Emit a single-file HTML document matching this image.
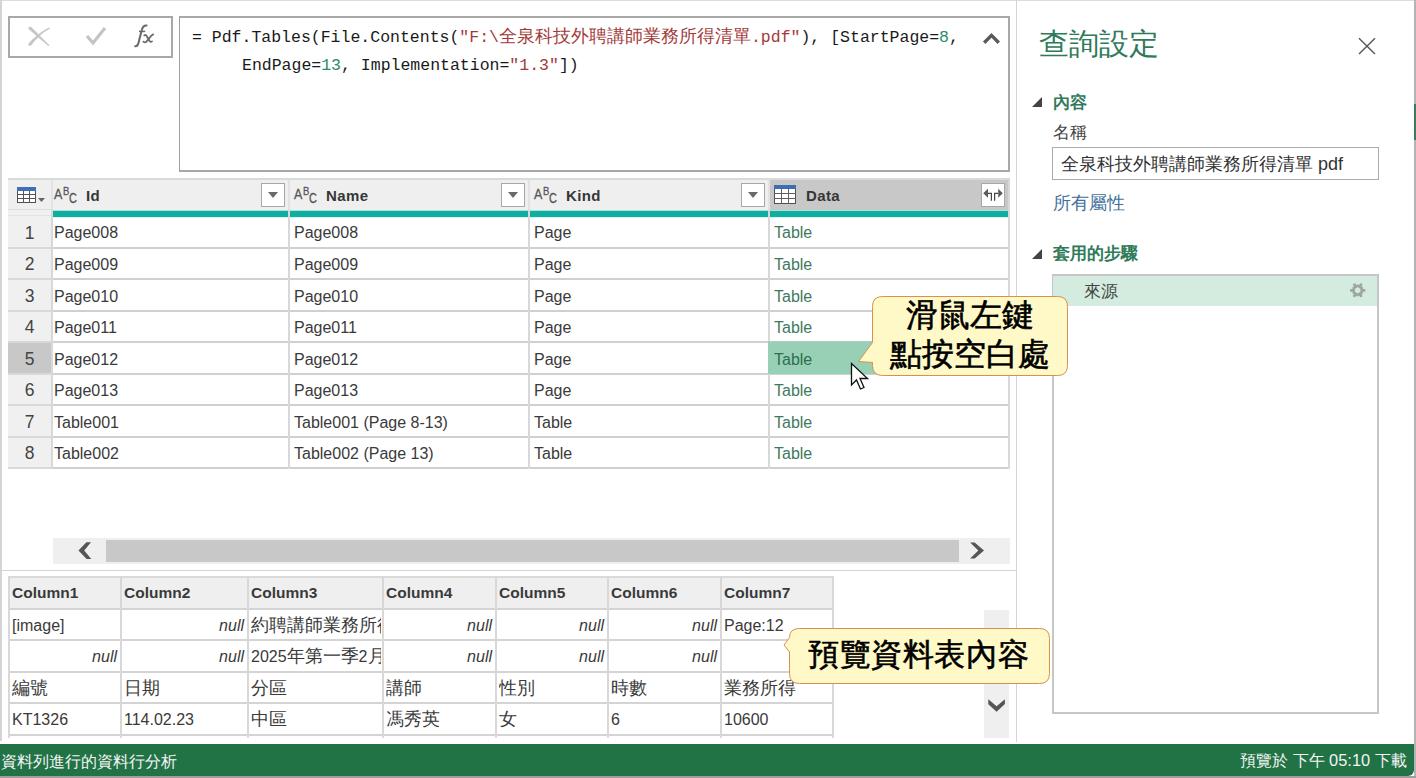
<!DOCTYPE html><html><head><meta charset="utf-8"><style>
html,body{margin:0;padding:0;width:1416px;height:778px;overflow:hidden;background:#fff;position:relative;font-family:"Liberation Sans", sans-serif;}
.t{position:absolute;white-space:nowrap;}
.sans{font-family:"Liberation Sans",sans-serif;}
.mono{font-family:"Liberation Mono",monospace;}
.serif{font-family:"Liberation Serif",serif;}
</style></head><body>
<div style="position:absolute;left:0px;top:0px;width:1416px;height:1px;background:#dcdcdc"></div>
<div style="position:absolute;left:0px;top:0px;width:2px;height:741px;background:#d4d4d4"></div>
<div style="position:absolute;left:8px;top:16px;width:161px;height:38px;border:2px solid #a8a8a8"></div>
<svg style="position:absolute;left:20px;top:18px" width="40" height="36" viewBox="20 18 40 36"><path d="M28.2 28.8 Q28.8 26.2 31 26.8 L49.4 45.2 L48.6 46.2 Z" fill="#c6c6c6"/><path d="M49.2 27.4 L50 28.6 Q40 34 31.2 45.2 Q29 46.6 28 44.2 Q29.5 41.5 40 33 Q45 29.2 49.2 27.4 Z" fill="#c6c6c6"/></svg>
<svg style="position:absolute;left:85px;top:25px" width="24" height="22" viewBox="0 0 24 22"><path d="M2 11 L8 18 L20 3" stroke="#c4c4c4" stroke-width="3.2" fill="none"/></svg>
<svg style="position:absolute;left:120px;top:18px" width="50" height="36" viewBox="0 0 50 36"><path d="M15.2 28.3 C17.5 28.5 18.6 26 19.2 22 L21.8 12 C22.6 8.5 23.8 7.2 26.6 7.4" stroke="#6a6a6a" stroke-width="2" fill="none" stroke-linecap="round"/><path d="M19 13.4 H25.2" stroke="#6a6a6a" stroke-width="1.5"/><path d="M24.2 17.4 C25.5 16.6 26.6 17 27.4 19.5 L29.8 23.2 C30.4 24 31.3 24 32 23.4 M33.2 16.4 C31.5 17 30.5 18.4 29 20.6 L26.5 23.6 C25.8 24.3 24.4 24.4 23.4 23.8" stroke="#6a6a6a" stroke-width="1.8" fill="none" stroke-linecap="round"/></svg>
<div style="position:absolute;left:179px;top:16px;width:828px;height:152px;border:2px solid #a8a8a8;border-left:1px solid #a0a0a0"></div>
<div class="t mono" style="left:192px;top:27.11px;height:21px;line-height:21px;font-size:16.5px;color:#1a1a1a;font-weight:normal;"><span style="color:#1a1a1a">= Pdf.Tables(File.Contents(</span><span style="color:#a33b3b">"F:\<span style="font-size:18px;font-weight:350">全泉科技外聘講師業務所得清單</span>.pdf"</span><span style="color:#1a1a1a">), [StartPage=</span><span style="color:#2a8a6a">8</span><span style="color:#1a1a1a">,</span></div>
<div class="t mono" style="left:242px;top:55.11px;height:21px;line-height:21px;font-size:16.5px;color:#1a1a1a;font-weight:normal;"><span style="color:#1a1a1a">EndPage=</span><span style="color:#2a8a6a">13</span><span style="color:#1a1a1a">, Implementation=</span><span style="color:#a33b3b">"1.3"</span><span style="color:#1a1a1a">])</span></div>
<svg style="position:absolute;left:975px;top:25px" width="33" height="27" viewBox="975 25 33 27"><path d="M984.2 42.7 L991.5 35.4 L998.8 42.7" stroke="#5a5a5a" stroke-width="3.4" fill="none" stroke-linejoin="miter"/></svg>
<div style="position:absolute;left:8px;top:178px;width:1001px;height:2px;background:#dadada"></div>
<div style="position:absolute;left:8px;top:180px;width:1000px;height:30px;background:#efefef"></div>
<div style="position:absolute;left:770px;top:180px;width:238px;height:30px;background:#c8c8c8"></div>
<div style="position:absolute;left:53px;top:210px;width:235px;height:1px;background:#a6e6dc"></div>
<div style="position:absolute;left:53px;top:211px;width:235px;height:6px;background:#11ad9e"></div>
<div style="position:absolute;left:53px;top:217px;width:235px;height:1px;background:#d4f6f0"></div>
<div style="position:absolute;left:290px;top:210px;width:238px;height:1px;background:#a6e6dc"></div>
<div style="position:absolute;left:290px;top:211px;width:238px;height:6px;background:#11ad9e"></div>
<div style="position:absolute;left:290px;top:217px;width:238px;height:1px;background:#d4f6f0"></div>
<div style="position:absolute;left:530px;top:210px;width:238px;height:1px;background:#a6e6dc"></div>
<div style="position:absolute;left:530px;top:211px;width:238px;height:6px;background:#11ad9e"></div>
<div style="position:absolute;left:530px;top:217px;width:238px;height:1px;background:#d4f6f0"></div>
<div style="position:absolute;left:770px;top:210px;width:238px;height:1px;background:#a6e6dc"></div>
<div style="position:absolute;left:770px;top:211px;width:238px;height:6px;background:#11ad9e"></div>
<div style="position:absolute;left:770px;top:217px;width:238px;height:1px;background:#d4f6f0"></div>
<div style="position:absolute;left:8px;top:209px;width:43px;height:8px;background:#f0f0f0"></div>
<div style="position:absolute;left:8px;top:209px;width:43px;height:1px;background:#dedede"></div>
<div style="position:absolute;left:8px;top:215px;width:43px;height:1px;background:#e2e2e2"></div>
<div style="position:absolute;left:8px;top:217px;width:43px;height:30px;background:#f0f0f0"></div>
<div style="position:absolute;left:8px;top:247px;width:43px;height:2px;background:#d9d9d9"></div>
<div style="position:absolute;left:53px;top:247px;width:956px;height:2px;background:#d0d0d0"></div>
<div style="position:absolute;left:8px;top:249px;width:43px;height:29px;background:#f0f0f0"></div>
<div style="position:absolute;left:8px;top:278px;width:43px;height:2px;background:#d9d9d9"></div>
<div style="position:absolute;left:53px;top:278px;width:956px;height:2px;background:#d0d0d0"></div>
<div style="position:absolute;left:8px;top:280px;width:43px;height:30px;background:#f0f0f0"></div>
<div style="position:absolute;left:8px;top:310px;width:43px;height:2px;background:#d9d9d9"></div>
<div style="position:absolute;left:53px;top:310px;width:956px;height:2px;background:#d0d0d0"></div>
<div style="position:absolute;left:8px;top:312px;width:43px;height:29px;background:#f0f0f0"></div>
<div style="position:absolute;left:8px;top:341px;width:43px;height:2px;background:#d9d9d9"></div>
<div style="position:absolute;left:53px;top:341px;width:956px;height:2px;background:#d0d0d0"></div>
<div style="position:absolute;left:8px;top:343px;width:43px;height:30px;background:#c8c8c8"></div>
<div style="position:absolute;left:8px;top:373px;width:43px;height:2px;background:#d9d9d9"></div>
<div style="position:absolute;left:53px;top:373px;width:956px;height:2px;background:#d0d0d0"></div>
<div style="position:absolute;left:8px;top:375px;width:43px;height:29px;background:#f0f0f0"></div>
<div style="position:absolute;left:8px;top:404px;width:43px;height:2px;background:#d9d9d9"></div>
<div style="position:absolute;left:53px;top:404px;width:956px;height:2px;background:#d0d0d0"></div>
<div style="position:absolute;left:8px;top:406px;width:43px;height:30px;background:#f0f0f0"></div>
<div style="position:absolute;left:8px;top:436px;width:43px;height:2px;background:#d9d9d9"></div>
<div style="position:absolute;left:53px;top:436px;width:956px;height:2px;background:#d0d0d0"></div>
<div style="position:absolute;left:8px;top:438px;width:43px;height:29px;background:#f0f0f0"></div>
<div style="position:absolute;left:8px;top:467px;width:43px;height:2px;background:#d9d9d9"></div>
<div style="position:absolute;left:53px;top:467px;width:956px;height:2px;background:#d0d0d0"></div>
<div style="position:absolute;left:51px;top:180px;width:2px;height:30px;background:#e2e2e2"></div>
<div style="position:absolute;left:51px;top:210px;width:2px;height:259px;background:#d8d8d8"></div>
<div style="position:absolute;left:288px;top:180px;width:2px;height:30px;background:#e2e2e2"></div>
<div style="position:absolute;left:288px;top:210px;width:2px;height:259px;background:#d8d8d8"></div>
<div style="position:absolute;left:528px;top:180px;width:2px;height:30px;background:#e2e2e2"></div>
<div style="position:absolute;left:528px;top:210px;width:2px;height:259px;background:#d8d8d8"></div>
<div style="position:absolute;left:768px;top:180px;width:2px;height:30px;background:#e2e2e2"></div>
<div style="position:absolute;left:768px;top:210px;width:2px;height:259px;background:#d8d8d8"></div>
<div style="position:absolute;left:1008px;top:178px;width:2px;height:291px;background:#d8d8d8"></div>
<div style="position:absolute;left:768px;top:341px;width:240px;height:32px;background:#97d0b4;border-top:1px solid #b8c8c0"></div>
<div class="t sans" style="left:54px;top:185.47px;height:19px;line-height:19px;font-size:14.5px;color:#555;font-weight:normal;transform:scaleX(0.86);transform-origin:0 0;-webkit-text-stroke:0.3px #555;">A</div>
<div class="t sans" style="left:63px;top:184.01px;height:15px;line-height:15px;font-size:11.5px;color:#555;font-weight:normal;transform:scaleX(0.82);transform-origin:0 0;-webkit-text-stroke:0.3px #555;">B</div>
<div class="t sans" style="left:68.5px;top:189.15px;height:18px;line-height:18px;font-size:14px;color:#555;font-weight:normal;transform:scaleX(0.78);transform-origin:0 0;-webkit-text-stroke:0.3px #555;">C</div>
<div class="t sans" style="left:86px;top:185.8px;height:20px;line-height:20px;font-size:15px;color:#363636;font-weight:bold;letter-spacing:0.4px;">Id</div>
<div style="position:absolute;left:261px;top:183px;width:22px;height:22px;background:#fff;border:1px solid #a8a8a8"></div>
<svg style="position:absolute;left:268px;top:192px" width="10" height="6" viewBox="0 0 10 6"><path d="M0 0 L10 0 L5 6 Z" fill="#6a6a6a"/></svg>
<div class="t sans" style="left:294px;top:185.47px;height:19px;line-height:19px;font-size:14.5px;color:#555;font-weight:normal;transform:scaleX(0.86);transform-origin:0 0;-webkit-text-stroke:0.3px #555;">A</div>
<div class="t sans" style="left:303px;top:184.01px;height:15px;line-height:15px;font-size:11.5px;color:#555;font-weight:normal;transform:scaleX(0.82);transform-origin:0 0;-webkit-text-stroke:0.3px #555;">B</div>
<div class="t sans" style="left:308.5px;top:189.15px;height:18px;line-height:18px;font-size:14px;color:#555;font-weight:normal;transform:scaleX(0.78);transform-origin:0 0;-webkit-text-stroke:0.3px #555;">C</div>
<div class="t sans" style="left:326px;top:185.8px;height:20px;line-height:20px;font-size:15px;color:#363636;font-weight:bold;letter-spacing:0.4px;">Name</div>
<div style="position:absolute;left:501px;top:183px;width:22px;height:22px;background:#fff;border:1px solid #a8a8a8"></div>
<svg style="position:absolute;left:508px;top:192px" width="10" height="6" viewBox="0 0 10 6"><path d="M0 0 L10 0 L5 6 Z" fill="#6a6a6a"/></svg>
<div class="t sans" style="left:534px;top:185.47px;height:19px;line-height:19px;font-size:14.5px;color:#555;font-weight:normal;transform:scaleX(0.86);transform-origin:0 0;-webkit-text-stroke:0.3px #555;">A</div>
<div class="t sans" style="left:543px;top:184.01px;height:15px;line-height:15px;font-size:11.5px;color:#555;font-weight:normal;transform:scaleX(0.82);transform-origin:0 0;-webkit-text-stroke:0.3px #555;">B</div>
<div class="t sans" style="left:548.5px;top:189.15px;height:18px;line-height:18px;font-size:14px;color:#555;font-weight:normal;transform:scaleX(0.78);transform-origin:0 0;-webkit-text-stroke:0.3px #555;">C</div>
<div class="t sans" style="left:566px;top:185.8px;height:20px;line-height:20px;font-size:15px;color:#363636;font-weight:bold;letter-spacing:0.4px;">Kind</div>
<div style="position:absolute;left:741px;top:183px;width:22px;height:22px;background:#fff;border:1px solid #a8a8a8"></div>
<svg style="position:absolute;left:748px;top:192px" width="10" height="6" viewBox="0 0 10 6"><path d="M0 0 L10 0 L5 6 Z" fill="#6a6a6a"/></svg>
<svg style="position:absolute;left:774px;top:185px" width="22" height="19" viewBox="0 0 22 19"><rect x="0.5" y="0.5" width="21" height="18" fill="#fff" stroke="#505050"/><rect x="0.5" y="0.5" width="21" height="3" fill="#3f6db3" stroke="#3f6db3"/><path d="M0 8.5 H22 M0 13.5 H22 M7.5 4 V19 M14.5 4 V19" stroke="#606060" stroke-width="1"/></svg>
<div class="t sans" style="left:806px;top:185.8px;height:20px;line-height:20px;font-size:15px;color:#363636;font-weight:bold;letter-spacing:0.4px;">Data</div>
<div style="position:absolute;left:981px;top:183px;width:22px;height:22px;background:#fff;border:1px solid #a8a8a8"></div>
<svg style="position:absolute;left:983px;top:187px" width="20" height="15" viewBox="0 0 20 15"><path d="M0.2 6.3 L5 1.8 V10.8 Z M19.8 6.3 L15.2 1.8 V10.8 Z" fill="#5a5a5a"/><path d="M5 6.3 H8.4 V13.8 M15 6.3 H11.6 V13.8" stroke="#444" stroke-width="1.2" fill="none"/></svg>
<svg style="position:absolute;left:17px;top:187px" width="20" height="16" viewBox="0 0 20 16"><rect x="0.5" y="0.5" width="18" height="15" fill="#fff" stroke="#505050"/><rect x="0.5" y="0.5" width="18" height="3" fill="#3f6fb5" stroke="#3f6fb5"/><path d="M0 7.5 H19 M0 11.5 H19 M6.5 4 V16 M12.5 4 V16" stroke="#555" stroke-width="1"/></svg>
<svg style="position:absolute;left:38px;top:198px" width="7" height="4" viewBox="0 0 7 4"><path d="M0 0 H7 L3.5 4Z" fill="#666"/></svg>
<div class="t sans" style="left:8px;top:222.43px;height:23px;line-height:23px;font-size:17.5px;color:#444;font-weight:normal;width:43px;text-align:center;">1</div>
<div class="t sans" style="left:54px;top:221.95px;height:21px;line-height:21px;font-size:16px;color:#3a3a3a;font-weight:normal;">Page008</div>
<div class="t sans" style="left:294px;top:221.95px;height:21px;line-height:21px;font-size:16px;color:#3a3a3a;font-weight:normal;">Page008</div>
<div class="t sans" style="left:534px;top:221.95px;height:21px;line-height:21px;font-size:16px;color:#3a3a3a;font-weight:normal;">Page</div>
<div class="t sans" style="left:774px;top:221.95px;height:21px;line-height:21px;font-size:16px;color:#3d7a5e;font-weight:normal;">Table</div>
<div class="t sans" style="left:8px;top:253.43px;height:23px;line-height:23px;font-size:17.5px;color:#444;font-weight:normal;width:43px;text-align:center;">2</div>
<div class="t sans" style="left:54px;top:253.95px;height:21px;line-height:21px;font-size:16px;color:#3a3a3a;font-weight:normal;">Page009</div>
<div class="t sans" style="left:294px;top:253.95px;height:21px;line-height:21px;font-size:16px;color:#3a3a3a;font-weight:normal;">Page009</div>
<div class="t sans" style="left:534px;top:253.95px;height:21px;line-height:21px;font-size:16px;color:#3a3a3a;font-weight:normal;">Page</div>
<div class="t sans" style="left:774px;top:253.95px;height:21px;line-height:21px;font-size:16px;color:#3d7a5e;font-weight:normal;">Table</div>
<div class="t sans" style="left:8px;top:285.43px;height:23px;line-height:23px;font-size:17.5px;color:#444;font-weight:normal;width:43px;text-align:center;">3</div>
<div class="t sans" style="left:54px;top:285.95px;height:21px;line-height:21px;font-size:16px;color:#3a3a3a;font-weight:normal;">Page010</div>
<div class="t sans" style="left:294px;top:285.95px;height:21px;line-height:21px;font-size:16px;color:#3a3a3a;font-weight:normal;">Page010</div>
<div class="t sans" style="left:534px;top:285.95px;height:21px;line-height:21px;font-size:16px;color:#3a3a3a;font-weight:normal;">Page</div>
<div class="t sans" style="left:774px;top:285.95px;height:21px;line-height:21px;font-size:16px;color:#3d7a5e;font-weight:normal;">Table</div>
<div class="t sans" style="left:8px;top:316.43px;height:23px;line-height:23px;font-size:17.5px;color:#444;font-weight:normal;width:43px;text-align:center;">4</div>
<div class="t sans" style="left:54px;top:316.95px;height:21px;line-height:21px;font-size:16px;color:#3a3a3a;font-weight:normal;">Page011</div>
<div class="t sans" style="left:294px;top:316.95px;height:21px;line-height:21px;font-size:16px;color:#3a3a3a;font-weight:normal;">Page011</div>
<div class="t sans" style="left:534px;top:316.95px;height:21px;line-height:21px;font-size:16px;color:#3a3a3a;font-weight:normal;">Page</div>
<div class="t sans" style="left:774px;top:316.95px;height:21px;line-height:21px;font-size:16px;color:#3d7a5e;font-weight:normal;">Table</div>
<div class="t sans" style="left:8px;top:348.43px;height:23px;line-height:23px;font-size:17.5px;color:#444;font-weight:normal;width:43px;text-align:center;">5</div>
<div class="t sans" style="left:54px;top:348.95px;height:21px;line-height:21px;font-size:16px;color:#3a3a3a;font-weight:normal;">Page012</div>
<div class="t sans" style="left:294px;top:348.95px;height:21px;line-height:21px;font-size:16px;color:#3a3a3a;font-weight:normal;">Page012</div>
<div class="t sans" style="left:534px;top:348.95px;height:21px;line-height:21px;font-size:16px;color:#3a3a3a;font-weight:normal;">Page</div>
<div class="t sans" style="left:774px;top:348.95px;height:21px;line-height:21px;font-size:16px;color:#2f6e50;font-weight:normal;">Table</div>
<div class="t sans" style="left:8px;top:379.43px;height:23px;line-height:23px;font-size:17.5px;color:#444;font-weight:normal;width:43px;text-align:center;">6</div>
<div class="t sans" style="left:54px;top:379.95px;height:21px;line-height:21px;font-size:16px;color:#3a3a3a;font-weight:normal;">Page013</div>
<div class="t sans" style="left:294px;top:379.95px;height:21px;line-height:21px;font-size:16px;color:#3a3a3a;font-weight:normal;">Page013</div>
<div class="t sans" style="left:534px;top:379.95px;height:21px;line-height:21px;font-size:16px;color:#3a3a3a;font-weight:normal;">Page</div>
<div class="t sans" style="left:774px;top:379.95px;height:21px;line-height:21px;font-size:16px;color:#3d7a5e;font-weight:normal;">Table</div>
<div class="t sans" style="left:8px;top:411.43px;height:23px;line-height:23px;font-size:17.5px;color:#444;font-weight:normal;width:43px;text-align:center;">7</div>
<div class="t sans" style="left:54px;top:411.95px;height:21px;line-height:21px;font-size:16px;color:#3a3a3a;font-weight:normal;">Table001</div>
<div class="t sans" style="left:294px;top:411.95px;height:21px;line-height:21px;font-size:16px;color:#3a3a3a;font-weight:normal;">Table001 (Page 8-13)</div>
<div class="t sans" style="left:534px;top:411.95px;height:21px;line-height:21px;font-size:16px;color:#3a3a3a;font-weight:normal;">Table</div>
<div class="t sans" style="left:774px;top:411.95px;height:21px;line-height:21px;font-size:16px;color:#3d7a5e;font-weight:normal;">Table</div>
<div class="t sans" style="left:8px;top:442.43px;height:23px;line-height:23px;font-size:17.5px;color:#444;font-weight:normal;width:43px;text-align:center;">8</div>
<div class="t sans" style="left:54px;top:442.95px;height:21px;line-height:21px;font-size:16px;color:#3a3a3a;font-weight:normal;">Table002</div>
<div class="t sans" style="left:294px;top:442.95px;height:21px;line-height:21px;font-size:16px;color:#3a3a3a;font-weight:normal;">Table002 (Page 13)</div>
<div class="t sans" style="left:534px;top:442.95px;height:21px;line-height:21px;font-size:16px;color:#3a3a3a;font-weight:normal;">Table</div>
<div class="t sans" style="left:774px;top:442.95px;height:21px;line-height:21px;font-size:16px;color:#3d7a5e;font-weight:normal;">Table</div>
<div style="position:absolute;left:53px;top:538px;width:957px;height:26px;background:#efefef"></div>
<div style="position:absolute;left:106px;top:540px;width:853px;height:22px;background:#c8c8c8"></div>
<svg style="position:absolute;left:70px;top:535px" width="30" height="30" viewBox="70 535 30 30"><polygon points="86.4,542.3 91,542.3 84.2,550.6 91.3,558.9 86.6,558.9 78.5,550.6" fill="#555"/></svg>
<svg style="position:absolute;left:965px;top:535px" width="30" height="30" viewBox="965 535 30 30"><polygon points="970.1,542.4 974.7,542.4 984,550.5 974.7,558.6 970.1,558.6 978.3,550.5" fill="#555"/></svg>
<div style="position:absolute;left:2px;top:570px;width:1014px;height:1px;background:#d4d4d4"></div>
<div style="position:absolute;left:8px;top:576px;width:826px;height:2px;background:#dadada"></div>
<div style="position:absolute;left:8px;top:578px;width:824px;height:31px;background:#efefef"></div>
<div style="position:absolute;left:8px;top:608px;width:826px;height:2px;background:#d4d4d4"></div>
<div style="position:absolute;left:8px;top:639px;width:826px;height:2px;background:#d4d4d4"></div>
<div style="position:absolute;left:8px;top:671px;width:826px;height:2px;background:#d4d4d4"></div>
<div style="position:absolute;left:8px;top:702px;width:826px;height:2px;background:#d4d4d4"></div>
<div style="position:absolute;left:8px;top:734px;width:826px;height:2px;background:#d4d4d4"></div>
<div style="position:absolute;left:8px;top:576px;width:2px;height:162px;background:#d8d8d8"></div>
<div style="position:absolute;left:120px;top:576px;width:2px;height:162px;background:#d8d8d8"></div>
<div style="position:absolute;left:247px;top:576px;width:2px;height:162px;background:#d8d8d8"></div>
<div style="position:absolute;left:382px;top:576px;width:2px;height:162px;background:#d8d8d8"></div>
<div style="position:absolute;left:495px;top:576px;width:2px;height:162px;background:#d8d8d8"></div>
<div style="position:absolute;left:607px;top:576px;width:2px;height:162px;background:#d8d8d8"></div>
<div style="position:absolute;left:720px;top:576px;width:2px;height:162px;background:#d8d8d8"></div>
<div style="position:absolute;left:832px;top:576px;width:2px;height:162px;background:#d8d8d8"></div>
<div class="t sans" style="left:12px;top:582.63px;height:20px;line-height:20px;font-size:15.5px;color:#3a3a3a;font-weight:bold;">Column1</div>
<div class="t sans" style="left:124px;top:582.63px;height:20px;line-height:20px;font-size:15.5px;color:#3a3a3a;font-weight:bold;">Column2</div>
<div class="t sans" style="left:251px;top:582.63px;height:20px;line-height:20px;font-size:15.5px;color:#3a3a3a;font-weight:bold;">Column3</div>
<div class="t sans" style="left:386px;top:582.63px;height:20px;line-height:20px;font-size:15.5px;color:#3a3a3a;font-weight:bold;">Column4</div>
<div class="t sans" style="left:499px;top:582.63px;height:20px;line-height:20px;font-size:15.5px;color:#3a3a3a;font-weight:bold;">Column5</div>
<div class="t sans" style="left:611px;top:582.63px;height:20px;line-height:20px;font-size:15.5px;color:#3a3a3a;font-weight:bold;">Column6</div>
<div class="t sans" style="left:724px;top:582.63px;height:20px;line-height:20px;font-size:15.5px;color:#3a3a3a;font-weight:bold;">Column7</div>
<div class="t sans" style="left:12px;top:614.95px;height:21px;line-height:21px;font-size:16px;color:#3a3a3a;font-weight:350;width:107px;overflow:hidden;">[image]</div>
<div class="t sans" style="left:122px;top:614.95px;height:21px;line-height:21px;font-size:16px;color:#3a3a3a;font-weight:normal;width:122px;text-align:right;font-style:italic;">null</div>
<div class="t sans" style="left:251px;top:614.95px;height:21px;line-height:21px;font-size:16px;color:#3a3a3a;font-weight:350;width:130px;overflow:hidden;"><span style="font-size:17.5px">約聘講師業務所得</span></div>
<div class="t sans" style="left:384px;top:614.95px;height:21px;line-height:21px;font-size:16px;color:#3a3a3a;font-weight:normal;width:108px;text-align:right;font-style:italic;">null</div>
<div class="t sans" style="left:497px;top:614.95px;height:21px;line-height:21px;font-size:16px;color:#3a3a3a;font-weight:normal;width:107px;text-align:right;font-style:italic;">null</div>
<div class="t sans" style="left:609px;top:614.95px;height:21px;line-height:21px;font-size:16px;color:#3a3a3a;font-weight:normal;width:108px;text-align:right;font-style:italic;">null</div>
<div class="t sans" style="left:724px;top:614.95px;height:21px;line-height:21px;font-size:16px;color:#3a3a3a;font-weight:350;width:107px;overflow:hidden;">Page:12</div>
<div class="t sans" style="left:10px;top:645.95px;height:21px;line-height:21px;font-size:16px;color:#3a3a3a;font-weight:normal;width:107px;text-align:right;font-style:italic;">null</div>
<div class="t sans" style="left:122px;top:645.95px;height:21px;line-height:21px;font-size:16px;color:#3a3a3a;font-weight:normal;width:122px;text-align:right;font-style:italic;">null</div>
<div class="t sans" style="left:251px;top:645.95px;height:21px;line-height:21px;font-size:16px;color:#3a3a3a;font-weight:350;width:130px;overflow:hidden;">2025<span style="font-size:17.5px">年第一季</span>2<span style="font-size:17.5px">月</span></div>
<div class="t sans" style="left:384px;top:645.95px;height:21px;line-height:21px;font-size:16px;color:#3a3a3a;font-weight:normal;width:108px;text-align:right;font-style:italic;">null</div>
<div class="t sans" style="left:497px;top:645.95px;height:21px;line-height:21px;font-size:16px;color:#3a3a3a;font-weight:normal;width:107px;text-align:right;font-style:italic;">null</div>
<div class="t sans" style="left:609px;top:645.95px;height:21px;line-height:21px;font-size:16px;color:#3a3a3a;font-weight:normal;width:108px;text-align:right;font-style:italic;">null</div>
<div class="t sans" style="left:724px;top:645.95px;height:21px;line-height:21px;font-size:16px;color:#3a3a3a;font-weight:350;width:107px;overflow:hidden;"></div>
<div class="t sans" style="left:12px;top:677.95px;height:21px;line-height:21px;font-size:16px;color:#3a3a3a;font-weight:350;width:107px;overflow:hidden;"><span style="font-size:17.5px">編號</span></div>
<div class="t sans" style="left:124px;top:677.95px;height:21px;line-height:21px;font-size:16px;color:#3a3a3a;font-weight:350;width:122px;overflow:hidden;"><span style="font-size:17.5px">日期</span></div>
<div class="t sans" style="left:251px;top:677.95px;height:21px;line-height:21px;font-size:16px;color:#3a3a3a;font-weight:350;width:130px;overflow:hidden;"><span style="font-size:17.5px">分區</span></div>
<div class="t sans" style="left:386px;top:677.95px;height:21px;line-height:21px;font-size:16px;color:#3a3a3a;font-weight:350;width:108px;overflow:hidden;"><span style="font-size:17.5px">講師</span></div>
<div class="t sans" style="left:499px;top:677.95px;height:21px;line-height:21px;font-size:16px;color:#3a3a3a;font-weight:350;width:107px;overflow:hidden;"><span style="font-size:17.5px">性別</span></div>
<div class="t sans" style="left:611px;top:677.95px;height:21px;line-height:21px;font-size:16px;color:#3a3a3a;font-weight:350;width:108px;overflow:hidden;"><span style="font-size:17.5px">時數</span></div>
<div class="t sans" style="left:724px;top:677.95px;height:21px;line-height:21px;font-size:16px;color:#3a3a3a;font-weight:350;width:107px;overflow:hidden;"><span style="font-size:17.5px">業務所得</span></div>
<div class="t sans" style="left:12px;top:708.95px;height:21px;line-height:21px;font-size:16px;color:#3a3a3a;font-weight:350;width:107px;overflow:hidden;">KT1326</div>
<div class="t sans" style="left:124px;top:708.95px;height:21px;line-height:21px;font-size:16px;color:#3a3a3a;font-weight:350;width:122px;overflow:hidden;">114.02.23</div>
<div class="t sans" style="left:251px;top:708.95px;height:21px;line-height:21px;font-size:16px;color:#3a3a3a;font-weight:350;width:130px;overflow:hidden;"><span style="font-size:17.5px">中區</span></div>
<div class="t sans" style="left:386px;top:708.95px;height:21px;line-height:21px;font-size:16px;color:#3a3a3a;font-weight:350;width:108px;overflow:hidden;"><span style="font-size:17.5px">馮秀英</span></div>
<div class="t sans" style="left:499px;top:708.95px;height:21px;line-height:21px;font-size:16px;color:#3a3a3a;font-weight:350;width:107px;overflow:hidden;"><span style="font-size:17.5px">女</span></div>
<div class="t sans" style="left:611px;top:708.95px;height:21px;line-height:21px;font-size:16px;color:#3a3a3a;font-weight:350;width:108px;overflow:hidden;">6</div>
<div class="t sans" style="left:724px;top:708.95px;height:21px;line-height:21px;font-size:16px;color:#3a3a3a;font-weight:350;width:107px;overflow:hidden;">10600</div>
<div style="position:absolute;left:984px;top:610px;width:25px;height:128px;background:#efefef"></div>
<svg style="position:absolute;left:980px;top:690px" width="35" height="30" viewBox="980 690 35 30"><polygon points="988.3,699.3 996.6,706.2 1004.9,699.3 1004.9,704 996.6,711.8 988.3,704.3" fill="#555"/></svg>
<div style="position:absolute;left:1016px;top:0px;width:1px;height:742px;background:#d4d4d4"></div>
<div class="t sans" style="left:1039px;top:24.1px;height:39px;line-height:39px;font-size:30px;color:#2f7a5a;font-weight:300;">查詢設定</div>
<svg style="position:absolute;left:1357px;top:36px" width="20" height="20" viewBox="0 0 20 20"><path d="M2 2.3 L18 18 M18 2.3 L2 18" stroke="#555" stroke-width="1.4" fill="none"/></svg>
<svg style="position:absolute;left:1032px;top:97px" width="10" height="10" viewBox="0 0 10 10"><path d="M10 0 V10 H0 Z" fill="#444"/></svg>
<div class="t sans" style="left:1053px;top:91.78px;height:21px;line-height:21px;font-size:16.5px;color:#2f7a5a;font-weight:bold;">內容</div>
<div class="t sans" style="left:1053px;top:121.78px;height:21px;line-height:21px;font-size:16.5px;color:#444;font-weight:350;">名稱</div>
<div style="position:absolute;left:1052px;top:147px;width:325px;height:31px;border:1px solid #ababab;background:#fff"></div>
<div class="t sans" style="left:1061px;top:153.26px;height:23px;line-height:23px;font-size:18px;color:#333;font-weight:350;">全泉科技外聘講師業務所得清單 pdf</div>
<div class="t sans" style="left:1053px;top:192.36px;height:23px;line-height:23px;font-size:17.7px;color:#41719c;font-weight:350;">所有屬性</div>
<svg style="position:absolute;left:1032px;top:249px" width="10" height="10" viewBox="0 0 10 10"><path d="M10 0 V10 H0 Z" fill="#444"/></svg>
<div class="t sans" style="left:1053px;top:242.0px;height:22px;line-height:22px;font-size:17.3px;color:#2f7a5a;font-weight:bold;">套用的步驟</div>
<div style="position:absolute;left:1052px;top:274px;width:323px;height:436px;border:2px solid #c6c6c6"></div>
<div style="position:absolute;left:1053px;top:276px;width:324px;height:30px;background:#d3ecdf"></div>
<div class="t sans" style="left:1084px;top:280.78px;height:21px;line-height:21px;font-size:16.5px;color:#444;font-weight:350;">來源</div>
<svg style="position:absolute;left:1349px;top:283px" width="18" height="15" viewBox="0 0 18 15"><polygon points="12.68,9.60 8.70,11.90 4.72,9.60 4.72,5.00 8.70,2.70 12.68,5.00" fill="none" stroke="#9ea6a1" stroke-width="2.6"/><path d="M12.70 7.30 L16.30 7.30 M10.70 10.76 L12.50 13.88 M6.70 10.76 L4.90 13.88 M4.70 7.30 L1.10 7.30 M6.70 3.84 L4.90 0.72 M10.70 3.84 L12.50 0.72" stroke="#9ea6a1" stroke-width="2.8"/></svg>
<div style="position:absolute;left:1414px;top:0px;width:2px;height:778px;background:#b4b4b4"></div>
<div style="position:absolute;left:1414px;top:104px;width:2px;height:36px;background:#3d7a5c"></div>
<div style="position:absolute;left:0px;top:744px;width:1414px;height:32px;background:#217346;border-bottom-right-radius:6px"></div>
<div style="position:absolute;left:0px;top:776px;width:1416px;height:2px;background:#9e9e9e"></div>
<div class="t sans" style="left:1px;top:750.81px;height:21px;line-height:21px;font-size:16.4px;color:#f4f4f4;font-weight:350;">資料列進行的資料行分析</div>
<div class="t sans" style="left:1240px;top:749.81px;height:21px;line-height:21px;font-size:16.4px;color:#f4f4f4;font-weight:350;">預覽於 下午 05:10 下載</div>
<svg style="position:absolute;left:850px;top:290px" width="230" height="95" viewBox="850 290 230 95">
<path d="M882.5 296.5 H1057.5 Q1067.5 296.5 1067.5 306.5 V365.5 Q1067.5 375.5 1057.5 375.5 H882.5 Q872.5 375.5 872.5 365.5 V362.5 L858.5 361.5 L872.5 342.5 V306.5 Q872.5 296.5 882.5 296.5 Z" fill="#fff9c8" stroke="#d8904f" stroke-width="1"/>
</svg>
<div class="t sans" style="left:906px;top:294.58px;height:41px;line-height:41px;font-size:31.5px;color:#000;font-weight:500;-webkit-text-stroke:0.6px #000;">滑鼠左鍵</div>
<div class="t sans" style="left:890px;top:333.51px;height:41px;line-height:41px;font-size:31.7px;color:#000;font-weight:500;-webkit-text-stroke:0.6px #000;">點按空白處</div>
<svg style="position:absolute;left:780px;top:620px" width="280" height="70" viewBox="780 620 280 70">
<path d="M799.5 628.5 H1039.5 Q1049.5 628.5 1049.5 638.5 V673.5 Q1049.5 683.5 1039.5 683.5 H799.5 Q789.5 683.5 789.5 673.5 V652 L784 645 L789.5 637.5 Q789.5 628.5 799.5 628.5 Z" fill="#fff9c8" stroke="#d8904f" stroke-width="1"/>
</svg>
<div class="t sans" style="left:808px;top:633.61px;height:41px;line-height:41px;font-size:31.4px;color:#000;font-weight:500;-webkit-text-stroke:0.6px #000;letter-spacing:0.6px;">預覽資料表內容</div>
<svg style="position:absolute;left:850px;top:362px" width="22" height="30" viewBox="0 0 22 30">
<path d="M1.5 1.5 V23 L6.5 18 L10.5 27 L14 25.5 L10 16.5 L17.5 16.5 Z" fill="#fff" stroke="#111" stroke-width="1.3" stroke-linejoin="miter"/>
</svg>
</body></html>
